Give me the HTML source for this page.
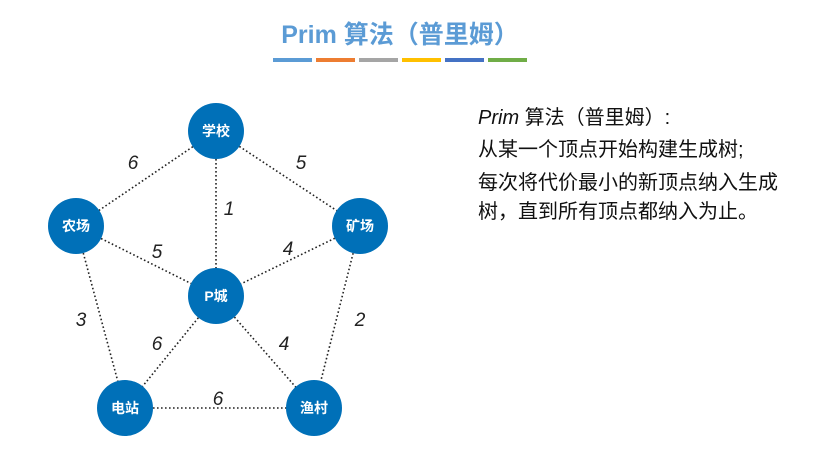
<!DOCTYPE html>
<html><head><meta charset="utf-8"><style>
body{margin:0;width:821px;height:463px;background:#fff;overflow:hidden;position:relative;font-family:"Liberation Sans","Noto Sans CJK SC",sans-serif}
.t{position:absolute;left:0;width:800px;top:15px;text-align:center;font-size:25px;color:#5b9bd5;font-weight:bold}
.bar{position:absolute;top:58px;height:4px;width:39px}
.r{position:absolute;left:478px;font-size:20px;color:#111;line-height:1}
</style></head><body>
<div class="t">Prim 算法（普里姆）</div>
<div class="bar" style="left:273px;background:#5b9bd5"></div>
<div class="bar" style="left:316px;background:#ed7d31"></div>
<div class="bar" style="left:359px;background:#a5a5a5"></div>
<div class="bar" style="left:402px;background:#ffc000"></div>
<div class="bar" style="left:445px;background:#4472c4"></div>
<div class="bar" style="left:488px;background:#70ad47"></div>
<div class="r" style="top:108px"><i>Prim</i> 算法（普里姆）:</div>
<div class="r" style="top:140px">从某一个顶点开始构建生成树;</div>
<div class="r" style="top:173px">每次将代价最小的新顶点纳入生成</div>
<div class="r" style="top:202px">树，直到所有顶点都纳入为止。</div>
<svg width="821" height="463" style="position:absolute;left:0;top:0">
<g stroke="#222" stroke-width="1.6" stroke-dasharray="1.6 2.4">
<line x1="216" y1="131" x2="76" y2="226"/><line x1="216" y1="131" x2="360" y2="226"/>
<line x1="216" y1="131" x2="216" y2="296"/><line x1="76" y1="226" x2="216" y2="296"/>
<line x1="360" y1="226" x2="216" y2="296"/><line x1="76" y1="226" x2="125" y2="408"/>
<line x1="360" y1="226" x2="314" y2="408"/><line x1="216" y1="296" x2="125" y2="408"/>
<line x1="216" y1="296" x2="314" y2="408"/><line x1="125" y1="408" x2="314" y2="408"/>
</g>
<g fill="#0070b8">
<circle cx="216" cy="131" r="28"/><circle cx="76" cy="226" r="28"/><circle cx="360" cy="226" r="28"/>
<circle cx="216" cy="296" r="28"/><circle cx="125" cy="408" r="28"/><circle cx="314" cy="408" r="28"/>
</g>
<g fill="#fff" font-size="14" font-weight="bold" text-anchor="middle" font-family="Liberation Sans,Noto Sans CJK SC,sans-serif">
<text x="216" y="136">学校</text><text x="76" y="231">农场</text><text x="360" y="231">矿场</text>
<text x="216" y="301">P城</text><text x="125" y="413">电站</text><text x="314" y="413">渔村</text>
</g>
<g fill="#222" font-size="19" font-style="italic" text-anchor="middle" font-family="Liberation Sans,sans-serif">
<text x="133" y="169">6</text><text x="301" y="169">5</text><text x="229" y="215">1</text>
<text x="157" y="258">5</text><text x="288" y="255">4</text><text x="81" y="326">3</text>
<text x="360" y="326">2</text><text x="157" y="350">6</text><text x="284" y="350">4</text>
<text x="218" y="405">6</text>
</g>
</svg>
</body></html>
